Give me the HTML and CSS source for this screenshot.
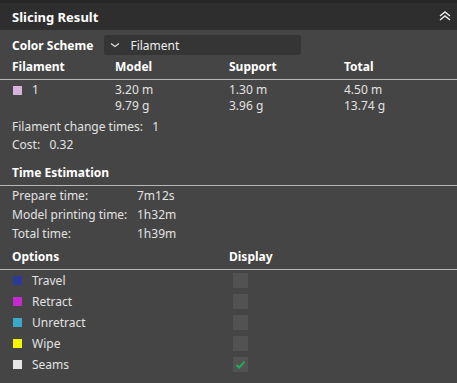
FILE: index.html
```html
<!DOCTYPE html>
<html lang="en">
<head>
    <meta charset="UTF-8">
    <title>Slicing Result</title>
    <link rel="stylesheet" href="styles.css">
</head>
<body>
    <div class="panel">
        <div class="panel-header">
            <span class="title">Slicing Result</span>
            <svg class="collapse" width="12" height="10" viewBox="0 0 12 10">
                <path d="M1 5 L6 1 L11 5 M1 9 L6 5 L11 9" fill="none" stroke="#eee" stroke-width="1.4"/>
            </svg>
        </div>

        <div class="scheme-row">
            <span class="bold">Color Scheme</span>
            <div class="combo">
                <svg width="10" height="6" viewBox="0 0 10 6"><path d="M1 1.5 L5 4.5 L9 1.5" fill="none" stroke="#ddd" stroke-width="1.2"/></svg>
                <span>Filament</span>
            </div>
        </div>

        <div class="grid cols4 head">
            <span>Filament</span><span>Model</span><span>Support</span><span>Total</span>
        </div>
        <div class="grid cols4 data">
            <span class="fil"><i class="swatch" style="background:#d6b3dd"></i>1</span>
            <span>3.20 m<br>9.79 g</span>
            <span>1.30 m<br>3.96 g</span>
            <span>4.50 m<br>13.74 g</span>
        </div>

        <div class="line">Filament change times:&nbsp;&nbsp;&nbsp;1</div>
        <div class="line">Cost:&nbsp;&nbsp;&nbsp;0.32</div>

        <div class="section-title">Time Estimation</div>
        <div class="grid cols-time">
            <span>Prepare time:</span><span>7m12s</span>
            <span>Model printing time:</span><span>1h32m</span>
            <span>Total time:</span><span>1h39m</span>
        </div>

        <div class="grid cols-opt head opt-head">
            <span>Options</span><span>Display</span>
        </div>
        <div class="options">
            <div class="opt"><span class="fil"><i class="swatch" style="background:#2c3a9a"></i>Travel</span><span class="check"></span></div>
            <div class="opt"><span class="fil"><i class="swatch" style="background:#c42ad0"></i>Retract</span><span class="check"></span></div>
            <div class="opt"><span class="fil"><i class="swatch" style="background:#3aa8c8"></i>Unretract</span><span class="check"></span></div>
            <div class="opt"><span class="fil"><i class="swatch" style="background:#f5f500"></i>Wipe</span><span class="check"></span></div>
            <div class="opt"><span class="fil"><i class="swatch" style="background:#e6e6e6"></i>Seams</span>
                <span class="check"><svg width="15" height="15" viewBox="0 0 15 15"><path d="M3.5 8 L6.2 10.5 L11.5 4.8" fill="none" stroke="#25a859" stroke-width="2"/></svg></span>
            </div>
        </div>
    </div>
</body>
</html>
```

FILE: styles.css
```css
html, body {
    margin: 0;
    padding: 0;
    background-color: #454545;
}
.panel {
    font-family: "Noto Sans", "Open Sans", sans-serif;
    font-size: 12px;
    color: #e2e2e2;
    width: 457px;
    height: 383px;
    border-top: 3px solid #262626;
    box-sizing: border-box;
    background-color: #454545;
}
.panel-header {
    height: 27px;
    background-color: #2e2e2e;
    display: flex;
    align-items: center;
    justify-content: space-between;
    padding: 0 6px 0 12px;
}
.title {
    font-weight: bold;
    color: #fff;
    font-size: 13px;
}
.collapse {
    margin-top: -2px;
}
.bold, .head, .section-title {
    font-weight: bold;
    color: #fff;
}
.scheme-row {
    display: flex;
    align-items: center;
    height: 22px;
    padding: 4px 0 0 12px;
}
.combo {
    margin-left: 11px;
    width: 197px;
    height: 20px;
    background-color: #353535;
    border-radius: 3px;
    display: flex;
    align-items: center;
    gap: 10px;
    padding-left: 6px;
    box-sizing: border-box;
    color: #eee;
}
.grid {
    display: grid;
    padding-left: 12px;
}
.cols4 {
    grid-template-columns: 103px 114px 115px auto;
}
.head {
    line-height: 16px;
    padding-top: 3px;
    padding-bottom: 4px;
    border-bottom: 1px solid #b8b8b8;
}
.data {
    line-height: 16px;
    padding-top: 2px;
    padding-bottom: 4px;
}
.fil {
    display: flex;
    align-items: center;
}
.data .fil {
    align-items: flex-start;
}
.swatch {
    display: inline-block;
    width: 9px;
    height: 9px;
    margin: 0 10px 0 1px;
}
.data .swatch {
    margin-top: 4px;
}
.line {
    padding-left: 12px;
    height: 18px;
    line-height: 18px;
}
.section-title {
    padding-left: 12px;
    margin-top: 9px;
    height: 22px;
    line-height: 20px;
    border-bottom: 1px solid #b8b8b8;
}
.cols-time {
    grid-template-columns: 125px auto;
    grid-auto-rows: 19px;
    align-items: center;
}
.cols-opt {
    grid-template-columns: 217px auto;
}
.opt-head {
    padding-top: 6px;
}
.options {
    padding-left: 12px;
}
.opt {
    display: grid;
    grid-template-columns: 221px 15px;
    height: 21px;
    align-items: center;
}
.check {
    width: 15px;
    height: 15px;
    background-color: #525252;
    display: block;
}
.check svg {
    display: block;
}
```
